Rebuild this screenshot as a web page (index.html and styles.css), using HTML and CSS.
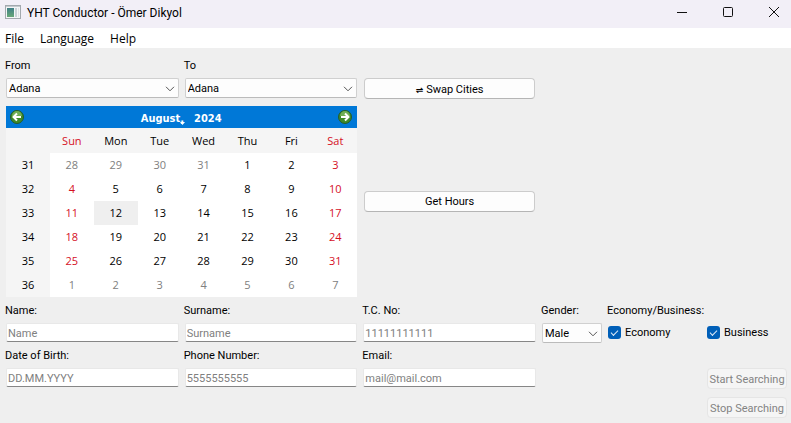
FILE: index.html
```html
<!DOCTYPE html>
<html lang="en">
<head>
<meta charset="utf-8">
<title>YHT Conductor - Ömer Dikyol</title>
<link rel="stylesheet" href="styles.css">
</head>
<body>
<header class="titlebar">
  <svg class="app-icon" width="16" height="14" viewBox="0 0 16 14" aria-hidden="true">
    <defs><linearGradient id="pane" x1="0" y1="0" x2="0" y2="1"><stop offset="0" stop-color="#3f7f86"/><stop offset="1" stop-color="#68a878"/></linearGradient></defs>
    <rect x=".5" y=".5" width="15" height="13" fill="#f4f5f6" stroke="#a3a9ae"/>
    <path d="M1 1.5h14" stroke="#c3c9ce"/>
    <rect x="2" y="3" width="7" height="9" fill="url(#pane)"/>
    <rect x="10" y="3" width="2" height="9" fill="#c8d2d6"/>
    <rect x="13" y="3" width="1" height="9" fill="#dde2e5"/>
  </svg>
  <h1 class="title">YHT Conductor - Ömer Dikyol</h1>
  <div class="window-controls">
    <button class="window-button" type="button" aria-label="Minimize"><svg width="12" height="12" viewBox="0 0 12 12"><path d="M1 6.5h10"/></svg></button>
    <button class="window-button" type="button" aria-label="Maximize"><svg width="12" height="12" viewBox="0 0 12 12"><rect x="1.5" y="1.5" width="9" height="9" rx="1"/></svg></button>
    <button class="window-button" type="button" aria-label="Close"><svg width="12" height="12" viewBox="0 0 12 12"><path d="M1 1l10 10M11 1L1 11"/></svg></button>
  </div>
</header>
<nav class="menubar">
  <button class="menu" type="button">File</button>
  <button class="menu" type="button">Language</button>
  <button class="menu" type="button">Help</button>
</nav>
<main class="form">
  <label class="label" for="from">From</label>
  <label class="label to-end" for="to">To</label>

  <div class="select">
    <select id="from"><option>Adana</option></select>
    <svg class="chevron" width="10" height="6" viewBox="0 0 10 6"><path d="M1 .8l4 4 4-4"/></svg>
  </div>
  <div class="select">
    <select id="to"><option>Adana</option></select>
    <svg class="chevron" width="10" height="6" viewBox="0 0 10 6"><path d="M1 .8l4 4 4-4"/></svg>
  </div>
  <button class="button" type="button"><span class="swap">⇌</span> Swap Cities</button>

  <section class="calendar">
    <div class="calendar-bar">
      <button class="calendar-button" type="button" aria-label="Previous month"><svg width="14" height="14" viewBox="0 0 14 14"><circle cx="7" cy="7" r="6.5" fill="#3f8a28" stroke="#245c2c"/><path d="M2 6a5 5 0 0 1 10 0z" fill="#6fae55"/><path d="M11 7H4M7 3.5L3.5 7 7 10.5" fill="none" stroke="#fff" stroke-width="2"/></svg></button>
      <div class="calendar-heading">
        <button class="calendar-button" type="button">August,<svg class="drop" width="5" height="3" viewBox="0 0 5 3"><path d="M0 0h5L2.5 3z" fill="#fff"/></svg></button>
        <button class="calendar-button" type="button">2024</button>
      </div>
      <button class="calendar-button" type="button" aria-label="Next month"><svg width="14" height="14" viewBox="0 0 14 14"><circle cx="7" cy="7" r="6.5" fill="#3f8a28" stroke="#245c2c"/><path d="M2 6a5 5 0 0 1 10 0z" fill="#6fae55"/><path d="M3 7h7M7 3.5L10.5 7 7 10.5" fill="none" stroke="#fff" stroke-width="2"/></svg></button>
    </div>
    <table class="days">
      <thead>
        <tr><th></th><th class="weekend">Sun</th><th>Mon</th><th>Tue</th><th>Wed</th><th>Thu</th><th>Fri</th><th class="weekend">Sat</th></tr>
      </thead>
      <tbody>
        <tr><th>31</th><td class="other">28</td><td class="other">29</td><td class="other">30</td><td class="other">31</td><td>1</td><td>2</td><td class="weekend">3</td></tr>
        <tr><th>32</th><td class="weekend">4</td><td>5</td><td>6</td><td>7</td><td>8</td><td>9</td><td class="weekend">10</td></tr>
        <tr><th>33</th><td class="weekend">11</td><td class="selected">12</td><td>13</td><td>14</td><td>15</td><td>16</td><td class="weekend">17</td></tr>
        <tr><th>34</th><td class="weekend">18</td><td>19</td><td>20</td><td>21</td><td>22</td><td>23</td><td class="weekend">24</td></tr>
        <tr><th>35</th><td class="weekend">25</td><td>26</td><td>27</td><td>28</td><td>29</td><td>30</td><td class="weekend">31</td></tr>
        <tr><th>36</th><td class="other">1</td><td class="other">2</td><td class="other">3</td><td class="other">4</td><td class="other">5</td><td class="other">6</td><td class="other">7</td></tr>
      </tbody>
    </table>
  </section>
  <button class="button hours" type="button">Get Hours</button>

  <label class="label row-start" for="name">Name:</label>
  <label class="label" for="surname">Surname:</label>
  <label class="label" for="tc">T.C. No:</label>
  <label class="label" for="gender">Gender:</label>
  <span class="label to-end" id="class-label">Economy/Business:</span>

  <input class="field" id="name" type="text" placeholder="Name">
  <input class="field" id="surname" type="text" placeholder="Surname">
  <input class="field" id="tc" type="text" placeholder="11111111111">
  <div class="select">
    <select id="gender"><option>Male</option></select>
    <svg class="chevron" width="10" height="6" viewBox="0 0 10 6"><path d="M1 .8l4 4 4-4"/></svg>
  </div>
  <label class="check"><input type="checkbox" checked>Economy</label>
  <label class="check"><input type="checkbox" checked>Business</label>

  <label class="label row-start" for="birth">Date of Birth:</label>
  <label class="label" for="phone">Phone Number:</label>
  <label class="label to-end" for="email">Email:</label>

  <input class="field row-start" id="birth" type="text" placeholder="DD.MM.YYYY">
  <input class="field" id="phone" type="tel" placeholder="5555555555">
  <input class="field" id="email" type="email" placeholder="mail@mail.com">
  <button class="button last" type="button" disabled>Start Searching</button>
  <button class="button last stop" type="button" disabled>Stop Searching</button>
</main>
</body>
</html>
```
FILE: styles.css
```css
* { box-sizing: border-box; }

body {
  margin: 0;
  background: #efefef;
  color: #000;
  font: 11px/14px Roboto, "Noto Sans", sans-serif;
}

button, input, select { font: inherit; color: inherit; margin: 0; }
button { padding: 0; border: 0; background: none; white-space: nowrap; }

.titlebar {
  display: flex;
  align-items: center;
  height: 28px;
  padding: 0 0 4px 5px;
  gap: 6px;
  background: #f2eff7;
}
.title { margin: 0; padding-top: 2px; font: 12px/16px Roboto, "Open Sans", sans-serif; }
.window-controls { display: flex; margin-left: auto; padding-right: 11px; gap: 34px; }
.window-button { display: flex; width: 12px; }
.window-button svg { fill: none; stroke: #111; stroke-width: 1; }

.menubar {
  display: flex;
  gap: 16px;
  height: 20px;
  padding: 1px 5px 0;
  background: #fff;
  font: 12px/19px "Open Sans", sans-serif;
}

.form {
  display: grid;
  grid-template-columns: repeat(3, minmax(0, 1fr)) 60px 93px 80px;
  gap: 6px;
  padding: 10px 4px 5px 6px;
}
.label { height: 14px; margin-left: -1px; line-height: 16px; white-space: nowrap; }
.to-end { grid-column-end: -1; }
.label.to-end[for="to"] { grid-column-start: 2; }
.label.to-end[for="email"] { grid-column-start: 3; }
#class-label { grid-column-start: 5; }
.row-start { grid-column-start: 1; }

.select { position: relative; height: 19px; }
.select select {
  appearance: none;
  display: block;
  width: 100%;
  height: 20px;
  padding: 2px 16px 0 2px;
  border: 1px solid #d0d0d0;
  border-bottom-color: #bbb;
  border-radius: 2px;
  background: #fdfdfd;
}
.chevron {
  position: absolute;
  right: 4px;
  top: 8px;
  fill: none;
  stroke: #555;
  pointer-events: none;
}

.button {
  height: 21px;
  margin: 0 1px;
  padding-top: 2px;
  border: 1px solid #ccc;
  border-bottom-color: #b5b5b5;
  border-radius: 4px;
  background: #fdfdfd;
}
.button:disabled { border-color: #e5e5e5; background: #f5f5f5; color: #838383; }
.swap { font: bold 9px/12px "DejaVu Sans", sans-serif; }
.hours { align-self: center; }
.last { grid-column: 6; margin: 0; }
.stop { margin-top: 2px; }

.calendar { grid-column: 1 / 3; margin-top: 1px; }
.calendar-bar {
  display: flex;
  align-items: center;
  justify-content: space-between;
  height: 22px;
  padding: 0 5px 0 4px;
  background: #0078d7;
  color: #fff;
  font: bold 11px/14px "DejaVu Sans Condensed", "DejaVu Sans", sans-serif;
}
.calendar-heading { display: flex; gap: 10px; padding-top: 3px; }
.calendar-button { position: relative; }
.calendar-button svg { display: block; }
.calendar-button .drop { position: absolute; right: -1px; bottom: 1px; }

.days {
  width: 100%;
  table-layout: fixed;
  border-collapse: collapse;
  background: #fff;
  text-align: center;
  font: 11px/14px "Open Sans", sans-serif;
}
.days th, .days td { height: 24px; padding: 0; font-weight: normal; }
.days th { background: #f5f5f5; }
.days thead th { height: 25px; }
.days .weekend { color: #d5101f; }
.days .other { color: #808080; }
.days .selected { background: #efefef; }

.field {
  width: 100%;
  height: 19px;
  padding: 2px 1px 0;
  border: 1px solid #e8e8e8;
  border-bottom-color: #868686;
  border-radius: 2px;
  background: #fff;
}
.field::placeholder { color: #808080; opacity: 1; }

.check { display: flex; align-items: center; gap: 4px; height: 19px; line-height: 16px; }
.check input {
  appearance: none;
  display: grid;
  place-items: center;
  width: 13px;
  height: 13px;
  border-radius: 3px;
  background: #005fb8;
}
.check input:checked::after {
  content: "";
  width: 6px;
  height: 3px;
  margin-bottom: 2px;
  border: solid #dceaf7;
  border-width: 0 0 1px 1px;
  transform: rotate(-45deg);
}
```
